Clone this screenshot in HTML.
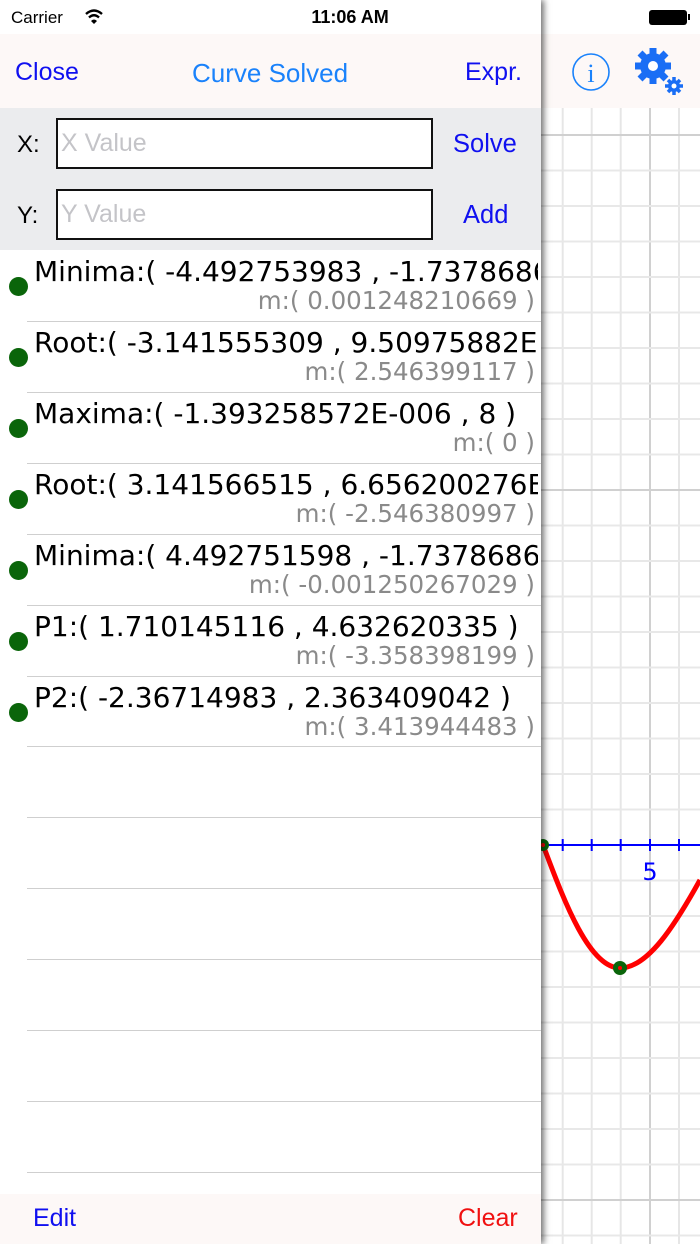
<!DOCTYPE html>
<html><head><meta charset="utf-8"><style>
*{margin:0;padding:0;box-sizing:border-box}
body{width:700px;height:1244px;position:relative;overflow:hidden;background:#fff;font-family:"Liberation Sans",sans-serif}
.a{position:absolute;white-space:nowrap}
.hdr{font-size:25.5px}
.row{position:absolute;left:0;width:541px;height:71px}
.row .dot{position:absolute;left:9px;top:26px;width:19px;height:19px;border-radius:50%;background:#0a650a}
.row .t{position:absolute;left:34px;top:4px;font-family:"DejaVu Sans",sans-serif;font-size:28px;color:#000;white-space:nowrap;width:504px;overflow:hidden}
.row .s{position:absolute;right:6px;top:35px;font-family:"DejaVu Sans",sans-serif;font-size:24.5px;color:#8a8a8a;white-space:nowrap}
.sep{position:absolute;left:27px;width:514px;height:1px;background:#cfcfcf}
.box{position:absolute;left:56px;width:377px;height:51px;border:2px solid #111;background:#fff;font-size:25px;color:#c4c4c8;padding:9px 0 0 3px}
</style></head><body>
<svg class="a" style="left:0;top:0" width="700" height="1244">
<g stroke="#e6e6e6" stroke-width="2">
<line x1="562.7" y1="108" x2="562.7" y2="1244"/><line x1="591.7" y1="108" x2="591.7" y2="1244"/><line x1="620.7" y1="108" x2="620.7" y2="1244"/><line x1="679" y1="108" x2="679" y2="1244"/>
</g>
<line x1="650" y1="106" x2="650" y2="1244" stroke="#d0d0d0" stroke-width="2"/>
<g stroke="#e6e6e6" stroke-width="2" id="h"></g>
<path d="M543 845 C 562 895, 588 968, 620 968 C 648 968, 675 925, 700 880" fill="none" stroke="#f00" stroke-width="5"/>
<line x1="541" y1="845" x2="700" y2="845" stroke="#00f" stroke-width="2"/>
<g stroke="#00f" stroke-width="2"><line x1="562.7" y1="839" x2="562.7" y2="851"/><line x1="591.7" y1="839" x2="591.7" y2="851"/><line x1="620.7" y1="839" x2="620.7" y2="851"/><line x1="650" y1="839" x2="650" y2="851"/><line x1="679" y1="839" x2="679" y2="851"/></g>
<text x="650" y="880" font-family="DejaVu Sans,sans-serif" font-size="24" fill="#00f" text-anchor="middle">5</text>
<circle cx="543" cy="845" r="6" fill="#0a650a"/><circle cx="543" cy="845" r="2" fill="#f00"/>
<circle cx="620" cy="968" r="7" fill="#0a650a"/><circle cx="620" cy="968" r="2" fill="#f00"/>
</svg>
<script>
var g=document.getElementById('h'),s='';
for(var k=-22;k<12;k++){var y=845+35.5*k;if(y<108)continue;var c=(k%10==0)?'#d0d0d0':'#e8e8e8';s+='<line x1="541" y1="'+y+'" x2="700" y2="'+y+'" stroke="'+c+'"/>';}
g.innerHTML=s;
</script>
<div class="a" style="left:541px;top:34px;width:159px;height:74px;background:#fdf8f7"></div>
<svg class="a" style="left:570px;top:52px" width="44" height="42"><circle cx="21" cy="20" r="18" fill="none" stroke="#1a82fb" stroke-width="1.6"/><text x="21" y="30" font-family="Liberation Serif,serif" font-size="26" fill="#1a82fb" text-anchor="middle">i</text></svg>
<svg class="a" style="left:634px;top:44px" width="52" height="52" viewBox="0 0 52 52">
<g fill="#1a6ef5"><circle cx="19" cy="22" r="13"/>
<g stroke="#1a6ef5" stroke-width="7"><line x1="19" y1="4" x2="19" y2="40"/><line x1="1" y1="22" x2="37" y2="22"/><line x1="6" y1="9" x2="32" y2="35"/><line x1="32" y1="9" x2="6" y2="35"/></g>
<circle cx="19" cy="22" r="5" fill="#fff"/>
<circle cx="40" cy="42" r="6"/><g stroke="#1a6ef5" stroke-width="3.5"><line x1="40" y1="33" x2="40" y2="51"/><line x1="31" y1="42" x2="49" y2="42"/><line x1="34" y1="36" x2="46" y2="48"/><line x1="46" y1="36" x2="34" y2="48"/></g>
<circle cx="40" cy="42" r="2.5" fill="#fff"/></g></svg>
<div class="a" style="left:0;top:0;width:541px;height:1244px;background:#fff;box-shadow:3px 0 6px rgba(0,0,0,.55)"></div>
<div class="a" style="left:0;top:34px;width:541px;height:74px;background:#fdf8f7"></div>
<div class="a" style="left:0;top:108px;width:541px;height:142px;background:#ebecee"></div>
<div class="a" style="left:0;top:1194px;width:541px;height:50px;background:#fdf8f7"></div>
<div class="a" style="left:11px;top:8px;font-size:17px">Carrier</div>
<svg class="a" style="left:84px;top:8px" width="20" height="16"><path d="M2 6 Q10 -1 18 6" fill="none" stroke="#000" stroke-width="2.4"/><path d="M5 9.5 Q10 5 15 9.5" fill="none" stroke="#000" stroke-width="2.4"/><path d="M7 13 L10 16 L13 13 Q10 10 7 13Z" fill="#000"/></svg>
<div class="a" style="left:0;width:700px;text-align:center;top:7px;font-size:18px;font-weight:bold">11:06 AM</div>
<div class="a" style="left:649px;top:10px;width:38px;height:15px;background:#000;border-radius:3px"></div>
<div class="a" style="left:688px;top:14px;width:2px;height:6px;background:#000"></div>
<div class="a hdr" style="left:15px;top:58px;color:#1010f0;font-size:25px">Close</div>
<div class="a hdr" style="left:192px;top:58px;color:#1a82fb;font-size:26px">Curve Solved</div>
<div class="a hdr" style="left:465px;top:58px;color:#1010f0;font-size:25px">Expr.</div>
<div class="a" style="left:17px;top:131px;font-size:24px">X:</div>
<div class="box" style="top:118px">X Value</div>
<div class="a" style="left:453px;top:130px;font-size:25.5px;color:#1010f0">Solve</div>
<div class="a" style="left:17px;top:202px;font-size:24px">Y:</div>
<div class="box" style="top:189px">Y Value</div>
<div class="a" style="left:463px;top:201px;font-size:25.5px;color:#1010f0">Add</div>
<div class="row" style="top:251px"><div class="dot"></div><div class="t">Minima:( -4.492753983 , -1.73786863</div><div class="s">m:( 0.001248210669 )</div></div>
<div class="row" style="top:322px"><div class="dot"></div><div class="t">Root:( -3.141555309 , 9.50975882E-006 )</div><div class="s">m:( 2.546399117 )</div></div>
<div class="row" style="top:393px"><div class="dot"></div><div class="t">Maxima:( -1.393258572E-006 , 8 )</div><div class="s">m:( 0 )</div></div>
<div class="row" style="top:464px"><div class="dot"></div><div class="t">Root:( 3.141566515 , 6.656200276E-006 )</div><div class="s">m:( -2.546380997 )</div></div>
<div class="row" style="top:535px"><div class="dot"></div><div class="t">Minima:( 4.492751598 , -1.73786863 )</div><div class="s">m:( -0.001250267029 )</div></div>
<div class="row" style="top:606px"><div class="dot"></div><div class="t">P1:( 1.710145116 , 4.632620335 )</div><div class="s">m:( -3.358398199 )</div></div>
<div class="row" style="top:677px"><div class="dot"></div><div class="t">P2:( -2.36714983 , 2.363409042 )</div><div class="s">m:( 3.413944483 )</div></div>
<div class="sep" style="top:321px"></div><div class="sep" style="top:392px"></div><div class="sep" style="top:463px"></div><div class="sep" style="top:534px"></div><div class="sep" style="top:605px"></div><div class="sep" style="top:676px"></div><div class="sep" style="top:746px"></div><div class="sep" style="top:817px"></div><div class="sep" style="top:888px"></div><div class="sep" style="top:959px"></div><div class="sep" style="top:1030px"></div><div class="sep" style="top:1101px"></div><div class="sep" style="top:1172px"></div>
<div class="a" style="left:33px;top:1204px;font-size:25px;color:#1010f0">Edit</div>
<div class="a" style="left:458px;top:1204px;font-size:25px;color:#f01010">Clear</div>
</body></html>
